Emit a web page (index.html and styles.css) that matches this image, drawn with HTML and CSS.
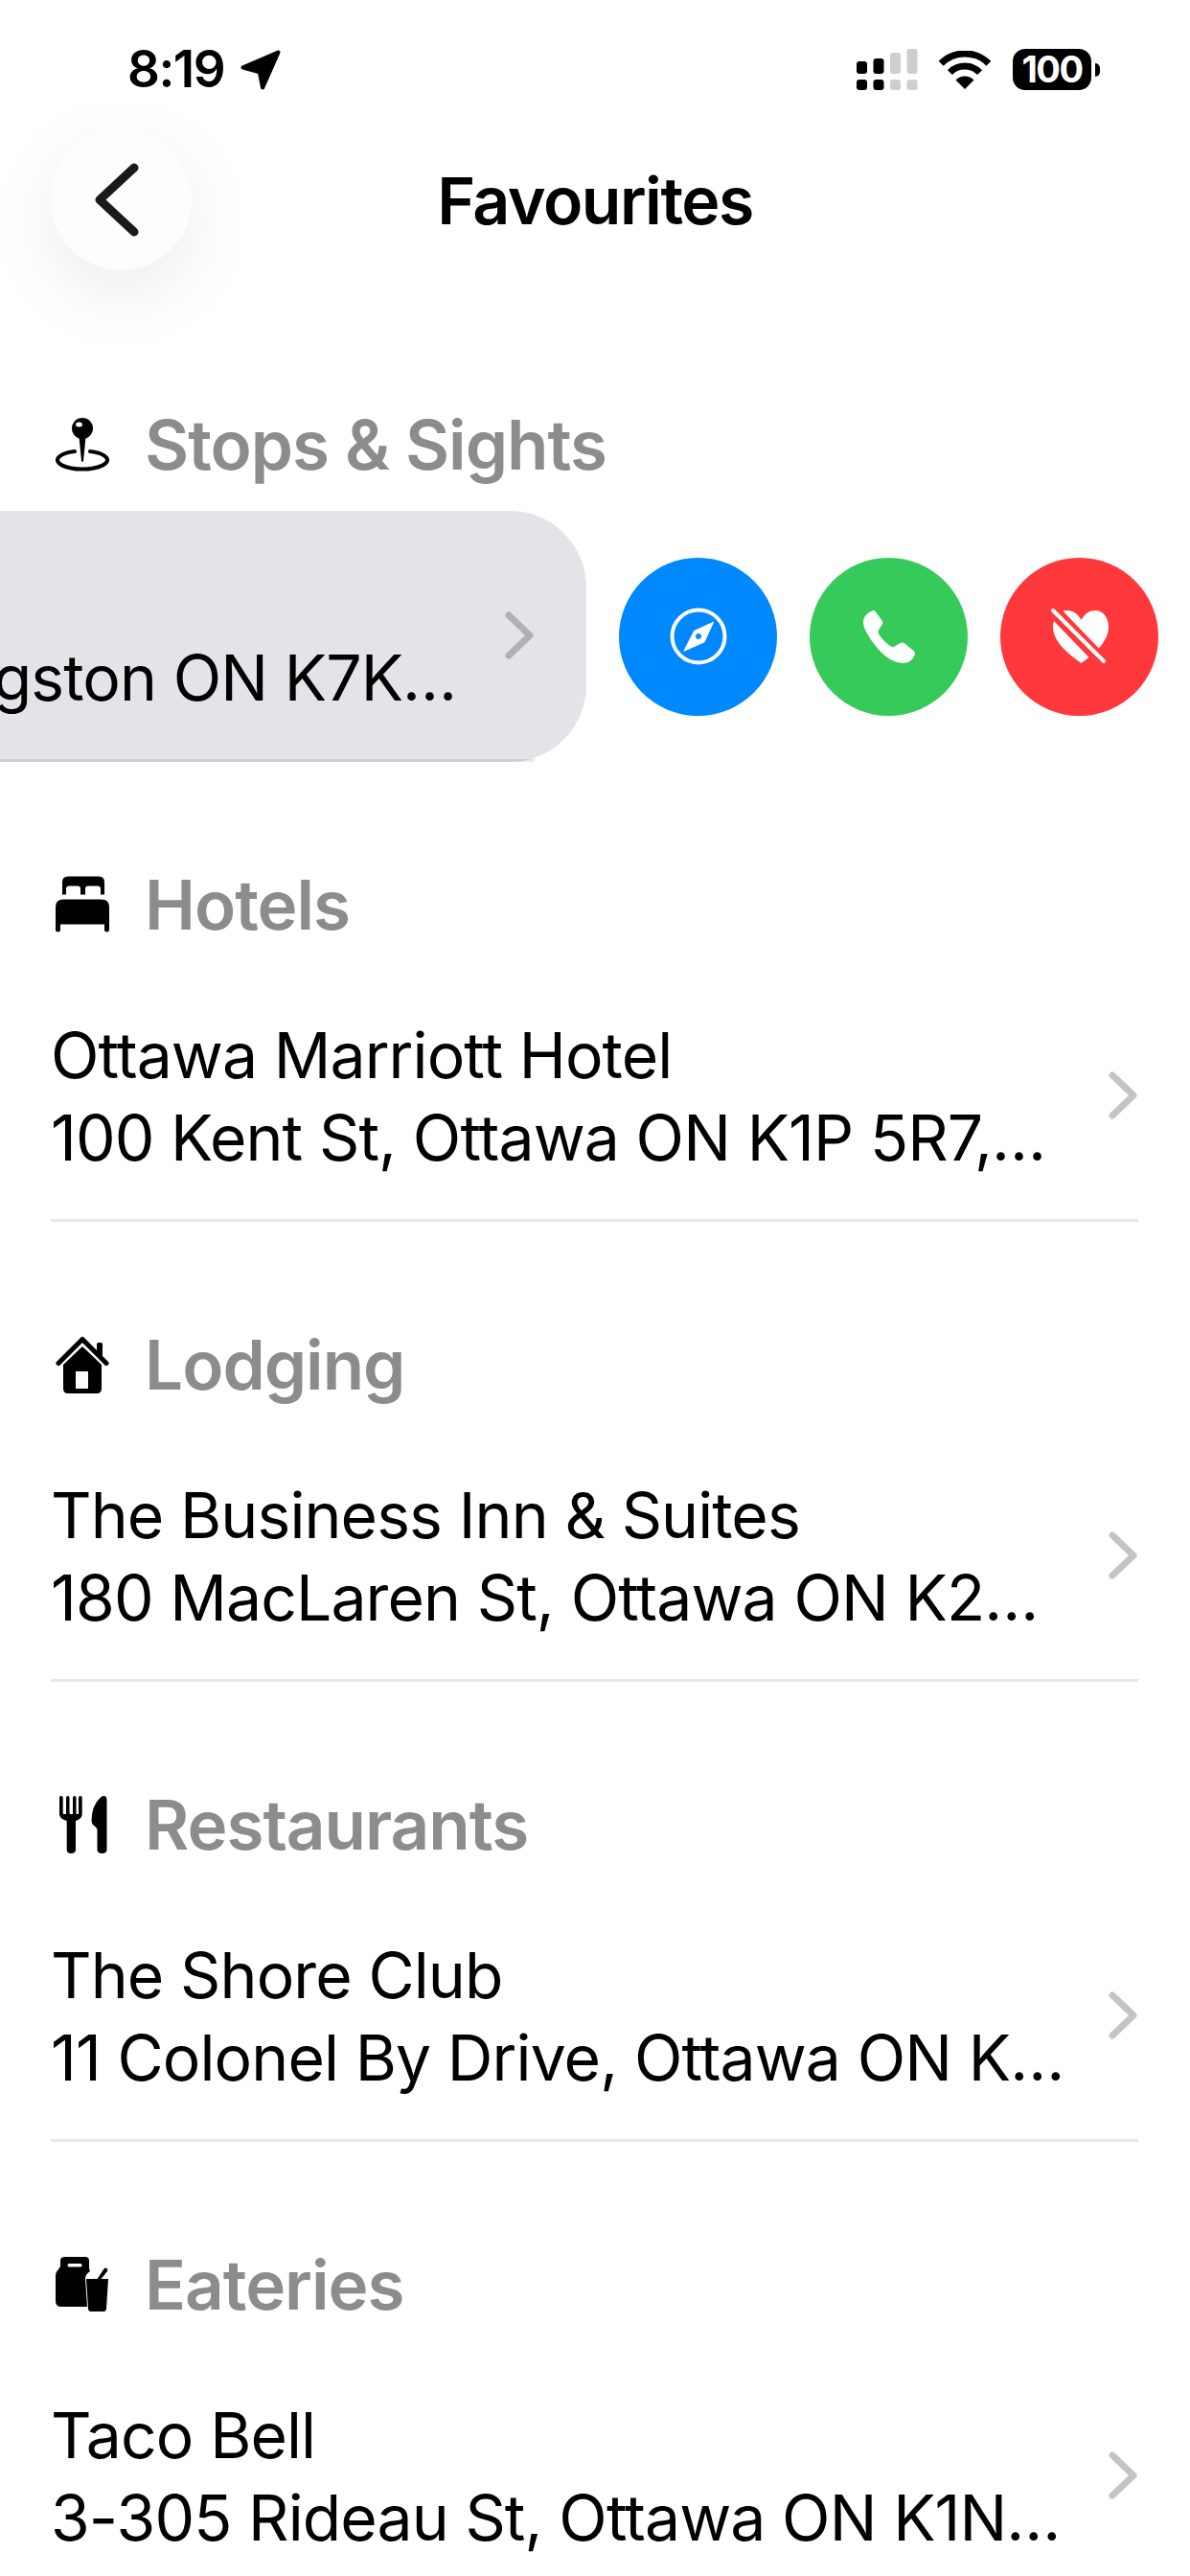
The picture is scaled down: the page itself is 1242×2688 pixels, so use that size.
FILE: index.html
```html
<!DOCTYPE html>
<html lang="en">
<head>
    <meta charset="UTF-8">
    <meta name="viewport" content="width=device-width, initial-scale=1.0">
    <title>Favourites</title>
    <link rel="stylesheet" href="styles.css">
</head>
<body>
<div class="page">

    <div class="status-bar">
        <div class="status-left">
            <span class="time">8:19</span>
            <svg class="arrow" viewBox="0 0 40 40"><path d="M37.5 2.5 L2.5 17.5 L19 22 L22 37.5 Z" fill="#000" stroke="#000" stroke-width="4" stroke-linejoin="round"/></svg>
        </div>
        <div class="status-right">
            <svg class="signal" viewBox="0 0 64 43">
                <rect x="0" y="13" width="11" height="13" rx="3"/>
                <rect x="17.5" y="10" width="11" height="16" rx="3"/>
                <rect x="0" y="32" width="11" height="11" rx="3"/>
                <rect x="17.5" y="32" width="11" height="11" rx="3"/>
                <g fill="#cfcfcf">
                    <rect x="35" y="4" width="11" height="22" rx="3"/>
                    <rect x="52.5" y="0" width="11" height="26" rx="3"/>
                    <rect x="35" y="32" width="11" height="11" rx="3"/>
                    <rect x="52.5" y="32" width="11" height="11" rx="3"/>
                </g>
            </svg>
            <svg class="wifi" viewBox="0 0 56 40">
                <path d="M3.2 13.2 A35 35 0 0 1 52.8 13.2" fill="none" stroke="#000" stroke-width="7"/>
                <path d="M12.4 22.6 A22 22 0 0 1 43.6 22.6" fill="none" stroke="#000" stroke-width="7"/>
                <path d="M28 40 L18.5 30.5 A13.5 13.5 0 0 1 37.5 30.5 Z"/>
            </svg>
            <div class="battery">
                <div class="battery-body">100</div>
                <div class="battery-cap"></div>
            </div>
        </div>
    </div>

    <div class="nav">
        <div class="back-btn">
            <svg width="46" height="77" viewBox="0 0 46 77"><path d="M41 5 L5 38.500 L41 72" fill="none" stroke="#1a1a1a" stroke-width="9" stroke-linecap="round" stroke-linejoin="round"/></svg>
        </div>
        <h1 class="nav-title">Favourites</h1>
    </div>

    <section class="section">
        <div class="section-head">
            <svg class="section-icon" viewBox="0 0 56 56">
                <circle cx="28" cy="11" r="11"/>
                <ellipse cx="24.500" cy="7" rx="3.500" ry="2.500" fill="#fff"/>
                <path d="M24.500 20 L31.500 20 L29 45 Q28 47 27 45 Z"/>
                <path d="M20 35 A26 9.500 0 1 0 36 35" fill="none" stroke="#000" stroke-width="4" stroke-linecap="round"/>
            </svg>
            <h2>Stops &amp; Sights</h2>
        </div>
        <div class="row row-open">
            <div class="row-surface">
                <div class="row-body">
                    <div class="row-text">
                        <div>Fort Henry</div>
                        <div>1 Fort Henry Dr Kingston ON K7K…</div>
                    </div>
                    <svg class="chevron" viewBox="0 0 30 50"><path d="M4 4 L26 25 L4 46" fill="none" stroke="currentColor" stroke-width="7" stroke-linecap="round" stroke-linejoin="round"/></svg>
                </div>
            </div>
            <div class="actions">
                <div class="action action-blue">
                    <svg width="60" height="60" viewBox="0 0 60 60">
                        <circle cx="30" cy="30" r="27.500" fill="none" stroke="#fff" stroke-width="4"/>
                        <path fill="#fff" fill-rule="evenodd" d="M45.500 15.300 L36 36 L14.800 45.300 L25.600 24.300 Z M30 26.500 A3.500 3.500 0 1 0 30 33.500 A3.500 3.500 0 1 0 30 26.500 Z" stroke="#fff" stroke-width="1" stroke-linejoin="round"/>
                    </svg>
                </div>
                <div class="action action-green">
                    <svg width="56" height="57" viewBox="0 0 56 57"><path fill="#fff" d="M10 1.500 C11.500 .7 13 1 14 2.500 L20.500 11.500 C21.500 13 21.300 14.500 20.500 16 L17 21.500 C16.300 22.800 16.300 24 17 25.200 C20 30.500 25 35.500 30 38.500 C31.200 39.200 32.500 39.200 33.800 38.400 L39.500 35 C41 34.200 42.500 34.300 44 35.300 L53.500 43 C55 44.300 55.500 45.500 54.800 47 C52.500 53 48 56 42.500 56 C32 56 21 47.500 13 37 C5.500 27 1 19 1 13 C1 8 4.500 4 10 1.500 Z"/></svg>
                </div>
                <div class="action action-red">
                    <svg width="62" height="60" viewBox="0 0 62 60">
                        <path fill="#fff" d="M32.500 58 C20 49 3 36 3 20 C3 10 10 3 18 3 C24 3 29.500 7 32.500 13 C35.500 7 41 3 47 3 C55 3 61 10 61 20 C61 36 45 49 32.500 58 Z"/>
                        <path d="M1 1 L58 60" stroke="#ff383c" stroke-width="14"/>
                        <path d="M3 3 L56 56" stroke="#fff" stroke-width="4" stroke-linecap="round"/>
                    </svg>
                </div>
            </div>
        </div>
    </section>

    <section class="section">
        <div class="section-head">
            <svg class="section-icon" viewBox="0 0 56 59">
                <path fill-rule="evenodd" d="M13 0 H45 Q51 0 51 6 V19 H47 V13 Q47 10 44 10 H34 Q31 10 31 13 V19 H26 V13 Q26 10 23 10 H14 Q11 10 11 13 V19 H7 V6 Q7 0 13 0 Z"/>
                <path d="M8 24 H48 Q56 24 56 32 V56 Q56 58 53.500 58 Q51 58 51 56 V50 H5 V56 Q5 58 2.500 58 Q0 58 0 56 V32 Q0 24 8 24 Z"/>
            </svg>
            <h2>Hotels</h2>
        </div>
        <div class="row">
            <div class="row-surface">
                <div class="row-body">
                    <div class="row-text">
                        <div>Ottawa Marriott Hotel</div>
                        <div>100 Kent St, Ottawa ON K1P 5R7,…</div>
                    </div>
                    <svg class="chevron" viewBox="0 0 30 50"><path d="M4 4 L26 25 L4 46" fill="none" stroke="currentColor" stroke-width="7" stroke-linecap="round" stroke-linejoin="round"/></svg>
                </div>
            </div>
        </div>
    </section>

    <section class="section">
        <div class="section-head">
            <svg class="section-icon" viewBox="0 0 56 60">
                <rect x="43" y="7" width="6" height="14" rx="1.500"/>
                <path d="M3 28.500 L28 3.500 L53 28.500" fill="none" stroke="#000" stroke-width="5" stroke-linecap="round" stroke-linejoin="round"/>
                <path fill-rule="evenodd" d="M28 11 L48 30 V55 Q48 60 43 60 H13 Q8 60 8 55 V30 Z M21 37 V55 H34 V37 Z"/>
            </svg>
            <h2>Lodging</h2>
        </div>
        <div class="row">
            <div class="row-surface">
                <div class="row-body">
                    <div class="row-text">
                        <div>The Business Inn &amp; Suites</div>
                        <div>180 MacLaren St, Ottawa ON K2…</div>
                    </div>
                    <svg class="chevron" viewBox="0 0 30 50"><path d="M4 4 L26 25 L4 46" fill="none" stroke="currentColor" stroke-width="7" stroke-linecap="round" stroke-linejoin="round"/></svg>
                </div>
            </div>
        </div>
    </section>

    <section class="section">
        <div class="section-head">
            <svg class="section-icon" viewBox="0 0 56 60">
                <path d="M4 2 Q4 0 6 0 Q7.700 0 7.700 2 V18 Q7.700 19 9 19 H11 V2 Q11 0 12.800 0 Q14.500 0 14.500 2 V18 Q14.500 19 16 19 H18 V2 Q18 0 19.800 0 Q21.500 0 21.500 2 V18 Q21.500 19 22.500 19 H24 V2 Q24 0 26 0 Q27.700 0 27.700 2 V19 Q27.700 24 21 26 V56 Q21 60 16 60 Q11.700 60 11.700 56 V26 Q4 24 4 19 Z"/>
                <path d="M50 0 Q53.500 0 53.500 4 V56 Q53.500 60 48.500 60 Q43.500 60 43.500 56 V36 Q43.500 33 40 31 Q37.500 29 37.500 26 Q37.500 10 47 1.500 Q48.500 0 50 0 Z"/>
            </svg>
            <h2>Restaurants</h2>
        </div>
        <div class="row">
            <div class="row-surface">
                <div class="row-body">
                    <div class="row-text">
                        <div>The Shore Club</div>
                        <div>11 Colonel By Drive, Ottawa ON K…</div>
                    </div>
                    <svg class="chevron" viewBox="0 0 30 50"><path d="M4 4 L26 25 L4 46" fill="none" stroke="currentColor" stroke-width="7" stroke-linecap="round" stroke-linejoin="round"/></svg>
                </div>
            </div>
        </div>
    </section>

    <section class="section">
        <div class="section-head">
            <svg class="section-icon" viewBox="0 0 56 60">
                <path fill-rule="evenodd" d="M10 1 H31 Q35 1 35 5 V13 L36 16 Q31 19 31 24 L33 53 H6 Q0 53 0 47 V20 Q0 17 3 14 L5 11 V5 Q5 1 10 1 Z M14 8 Q12.500 8 12.500 9.500 Q12.500 11.500 14 11.500 H26 Q27.500 11.500 27.500 9.500 Q27.500 8 26 8 Z"/>
                <path d="M32 24 H43.500 L50.500 13.500 Q52 12 53.500 13 Q55 14.500 54 16 L47.500 24 H55 L53 55 Q52.800 58 50 58 H37 Q34.200 58 34 55 Z"/>
            </svg>
            <h2>Eateries</h2>
        </div>
        <div class="row">
            <div class="row-surface">
                <div class="row-body">
                    <div class="row-text">
                        <div>Taco Bell</div>
                        <div>3-305 Rideau St, Ottawa ON K1N…</div>
                    </div>
                    <svg class="chevron" viewBox="0 0 30 50"><path d="M4 4 L26 25 L4 46" fill="none" stroke="currentColor" stroke-width="7" stroke-linecap="round" stroke-linejoin="round"/></svg>
                </div>
            </div>
        </div>
    </section>

</div>
</body>
</html>
```

FILE: styles.css
```css
html, body {
    margin: 0;
    padding: 0;
}

body {
    font-family: Inter, "Liberation Sans", sans-serif;
    background-color: #ffffff;
    color: #000;
}

.page {
    width: 1242px;
    height: 2688px;
    overflow: hidden;
}

/* status bar */
.status-bar {
    height: 135px;
    box-sizing: border-box;
    padding: 51px 94px 0 133px;
    display: flex;
    justify-content: space-between;
    align-items: flex-start;
}

.status-left {
    display: flex;
    align-items: center;
    gap: 17px;
    height: 43px;
}

.time {
    font-size: 53px;
    font-weight: 600;
    letter-spacing: -1.5px;
    line-height: 43px;
}

.arrow {
    width: 42px;
    height: 42px;
}

.status-right {
    display: flex;
    align-items: center;
    height: 43px;
}

.signal {
    width: 64px;
    height: 43px;
    margin-right: 21px;
}

.wifi {
    width: 56px;
    height: 40px;
    margin-right: 22px;
}

.battery {
    display: flex;
    align-items: center;
}

.battery-body {
    width: 82px;
    height: 43px;
    border-radius: 13px;
    background-color: #000;
    color: #fff;
    font-size: 38px;
    font-weight: 700;
    letter-spacing: -1.5px;
    line-height: 43px;
    text-align: center;
}

.battery-cap {
    width: 5px;
    height: 14px;
    margin-left: 4px;
    background-color: #000;
    border-radius: 0 7px 7px 0;
}

/* nav */
.nav {
    display: grid;
    grid-template-columns: 147px 1fr 147px;
    align-items: center;
    padding: 0 53px;
    margin-bottom: 102px;
}

.back-btn {
    width: 147px;
    height: 147px;
    border-radius: 50%;
    background-color: #fdfdfd;
    box-shadow: 0 24px 80px rgba(0, 0, 0, 0.08);
    display: flex;
    align-items: center;
    justify-content: center;
}

.back-btn svg {
    margin-right: 10px;
}

.nav-title {
    margin: 0;
    font-size: 68px;
    font-weight: 600;
    letter-spacing: -1.5px;
    text-align: center;
}

/* sections */
.section {
    margin-bottom: 69px;
}

.section-head {
    display: flex;
    align-items: center;
    height: 60px;
    padding: 50px 58px 39px;
}

.section-icon {
    width: 56px;
    height: 60px;
    flex-shrink: 0;
}

.section-head h2 {
    margin: 0 0 0 37px;
    font-size: 71px;
    font-weight: 600;
    letter-spacing: -1px;
    line-height: 60px;
    color: #8c8c8e;
}

/* rows */
.row-surface {
    width: 1242px;
    box-sizing: border-box;
    padding: 0 54px 0 53px;
}

.row-body {
    height: 262px;
    box-sizing: border-box;
    display: flex;
    align-items: center;
    justify-content: space-between;
    border-bottom: 3px solid rgba(60, 60, 67, 0.12);
}

.row-text {
    font-size: 66px;
    line-height: 86px;
    letter-spacing: -0.9px;
    white-space: nowrap;
    padding-top: 2px;
}

.chevron {
    width: 30px;
    height: 50px;
    margin-right: 1px;
    color: rgba(60, 60, 67, 0.3);
    flex-shrink: 0;
}

/* swiped row */
.row-open {
    display: flex;
    margin-left: -630px;
}

.row-open .row-surface {
    flex: 0 0 1242px;
    background-color: #e3e3e8;
    border-radius: 0 80px 80px 0;
}

.actions {
    display: flex;
    align-items: center;
    gap: 34px;
    margin-left: 34px;
}

.action {
    width: 165px;
    height: 165px;
    border-radius: 50%;
    display: flex;
    align-items: center;
    justify-content: center;
}

.action-blue {
    background-color: #0088ff;
}

.action-green {
    background-color: #36ca5b;
}

.action-red {
    background-color: #ff383c;
}
```
